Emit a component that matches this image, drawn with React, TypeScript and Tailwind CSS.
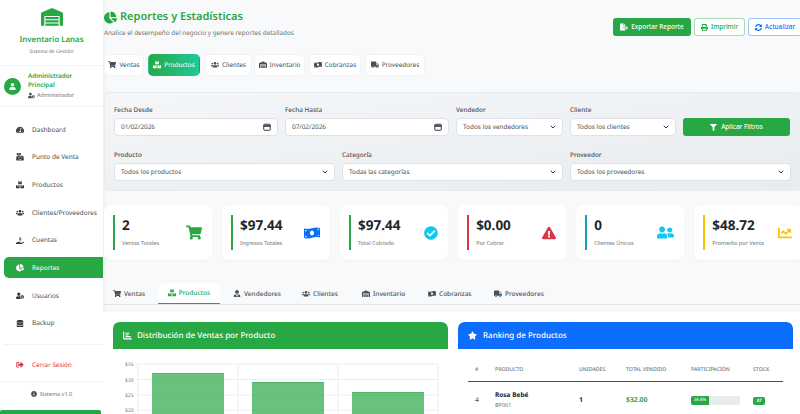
import React from 'react';
import { ChevronDown } from 'lucide-react';
import {
  FaBoxes, FaCashRegister, FaChartLine, FaChartPie, FaCheckCircle, FaDatabase,
  FaExclamationTriangle, FaFileExport, FaFilter, FaHandHoldingUsd, FaInfoCircle, FaMoneyBillWave,
  FaPrint, FaShoppingCart, FaSignOutAlt, FaStar, FaSyncAlt, FaTachometerAlt, FaTruck, FaUser,
  FaUserCog, FaUserFriends, FaUserShield, FaUserTie, FaUsers, FaWarehouse,
} from 'react-icons/fa';
import { FaChartBar } from 'react-icons/fa6';

const navItems = [
  { label: 'Dashboard', icon: FaTachometerAlt },
  { label: 'Punto de Venta', icon: FaCashRegister },
  { label: 'Productos', icon: FaBoxes },
  { label: 'Clientes/Proveedores', icon: FaUsers },
  { label: 'Cuentas', icon: FaHandHoldingUsd },
  { label: 'Reportes', icon: FaChartPie, active: true },
  { label: 'Usuarios', icon: FaUserCog },
  { label: 'Backup', icon: FaDatabase },
];

const topTabs = [
  { label: 'Ventas', icon: FaShoppingCart, cls: 'w-[40px]' },
  { label: 'Productos', icon: FaBoxes, cls: 'w-[52px] bg-gradient-to-r from-[#28a745] to-[#20c997] !text-white border-transparent' },
  { label: 'Clientes', icon: FaUsers, cls: 'w-[47px] ml-px border-[#28a745]/50' },
  { label: 'Inventario', icon: FaWarehouse, cls: 'w-[51px] -ml-0.5' },
  { label: 'Cobranzas', icon: FaMoneyBillWave, cls: 'w-[52px]' },
  { label: 'Proveedores', icon: FaTruck, cls: 'w-[60px]' },
];

const stats = [
  { value: '2', label: 'Ventas Totales', bar: 'bg-[#28a745]', icon: FaShoppingCart, color: 'text-[#28a745] h-[15px] w-[16px]' },
  { value: '$97.44', label: 'Ingresos Totales', bar: 'bg-[#28a745]', icon: FaMoneyBillWave, color: 'text-[#0d6efd] h-[16px] w-[16px]' },
  { value: '$97.44', label: 'Total Cobrado', bar: 'bg-[#28a745]', icon: FaCheckCircle, color: 'text-[#0dcaf0] h-[14px] w-[14px]' },
  { value: '$0.00', label: 'Por Cobrar', bar: 'bg-[#dc3545]', icon: FaExclamationTriangle, color: 'text-[#dc3545] h-[14px] w-[14px]' },
  { value: '0', label: 'Clientes Únicos', bar: 'bg-[#17a2b8]', icon: FaUserFriends, color: 'text-[#0dcaf0] h-[15px] w-[17px]' },
  { value: '$48.72', label: 'Promedio por Venta', bar: 'bg-[#ffc107]', icon: FaChartLine, color: 'text-[#ffc107] h-[14px] w-[14px]' },
];

const lowerTabs = [
  { label: 'Ventas', icon: FaShoppingCart, cls: 'w-[45px]' },
  { label: 'Productos', icon: FaBoxes, active: true, cls: 'w-[62px] justify-center' },
  { label: 'Vendedores', icon: FaUserTie, cls: 'w-[69px] pl-[13px]' },
  { label: 'Clientes', icon: FaUsers, cls: 'w-[60px] pl-[13px]' },
  { label: 'Inventario', icon: FaWarehouse, cls: 'w-[66px] pl-[13px]' },
  { label: 'Cobranzas', icon: FaMoneyBillWave, cls: 'w-[66px] pl-[13px]' },
  { label: 'Proveedores', icon: FaTruck, cls: 'w-[70px] pl-[13px]' },
];

function Field({ label, value, className = '' }: { label: string; value: string; className?: string }) {
  return (
    <div className={className}>
      <div className="mb-[3px] text-[6.4px] leading-[11px] font-medium text-[#495057]">{label}</div>
      <div className="relative flex h-[18px] items-center rounded-[4px] border border-[#dee2e6] bg-white pl-[6px] text-[6.4px] text-[#495057]">
        {value}
        <ChevronDown className="absolute right-[5px] top-[4px] h-2 w-2 text-[#343a40]" strokeWidth={3} />
      </div>
    </div>
  );
}

function DateField({ label, value }: { label: string; value: string }) {
  return (
    <div>
      <div className="mb-[3px] text-[6.4px] leading-[11px] font-medium text-[#495057]">{label}</div>
      <div className="relative flex h-[18px] items-center rounded-[4px] border border-[#dee2e6] bg-white pl-[6px] text-[6.4px] text-[#495057]">
        {value}
        <svg viewBox="0 0 16 16" className="absolute right-[6px] top-[4px] h-2 w-2" fill="none" stroke="#212529" strokeWidth="1.8">
          <rect x="1.5" y="2.5" width="13" height="12" rx="1.5" />
          <path d="M1.5 6h13" strokeWidth="3" />
        </svg>
      </div>
    </div>
  );
}

function SalesChart() {
  const ticks = [
    { label: '$35', y: 15 },
    { label: '$30', y: 30.5 },
    { label: '$25', y: 46 },
    { label: '$20', y: 61 },
  ];
  const bars = [
    { x: 39, y: 24 },
    { x: 139, y: 33 },
    { x: 239, y: 43 },
  ];
  return (
    <svg viewBox="0 0 335 65" className="h-[65px] w-[335px]">
      {ticks.map((t) => (
        <g key={t.label}>
          <line x1="22" x2="325" y1={t.y} y2={t.y} stroke="#eeeeee" />
          <text x="12" y={t.y + 2} fontSize="5" fill="#777777" fontFamily="'Noto Sans', sans-serif">{t.label}</text>
        </g>
      ))}
      {[25, 125, 225, 325].map((x) => (
        <line key={x} x1={x} x2={x} y1="15" y2="65" stroke="#eeeeee" />
      ))}
      {bars.map((b) => (
        <g key={b.x}>
          <rect x={b.x} y={b.y} width="72" height={65 - b.y} fill="#28a745" fillOpacity="0.7" />
          <rect x={b.x} y={b.y} width="72" height="1" fill="#28a745" fillOpacity="0.35" />
        </g>
      ))}
    </svg>
  );
}

export default function App() {
  return (
    <div className="flex h-[414px] w-[800px] overflow-hidden bg-[#f8f9fa] font-['Noto_Sans',sans-serif] text-[#212529] [text-rendering:geometricPrecision]">
      <aside className="flex w-[103px] shrink-0 flex-col bg-white shadow-[1px_0_6px_rgba(0,0,0,0.06)]">
        <div className="flex h-[66px] flex-col items-center border-b border-[#f1f3f5] pt-[8px]">
          <FaWarehouse className="h-[18px] w-[22px] text-[#28a745]" />
          <div className="mt-[7px] text-[7.8px] leading-[14px] font-semibold text-[#28a745]">Inventario Lanas</div>
          <div className="mt-[1px] text-[4.9px] leading-[8px] text-[#6c757d]">Sistema de Gestión</div>
        </div>
        <div className="flex h-[41px] items-center gap-[7px] border-b border-[#f1f3f5] pl-[4px]">
          <div className="flex h-[17px] w-[17px] shrink-0 items-center justify-center rounded-full bg-[#28a745]">
            <FaUser className="h-[7px] w-[7px] text-white" />
          </div>
          <div>
            <div className="text-[6.3px] leading-[8.5px] font-semibold text-[#28a745]">Administrador<br />Principal</div>
            <div className="mt-[2px] flex items-center gap-[2px] text-[5.5px] leading-[9px] text-[#6c757d]">
              <FaUserShield className="h-[7px] w-[7px] text-[#495057]" />
              Administrador
            </div>
          </div>
        </div>
        <nav className="mt-[12px] flex flex-col gap-[6.7px] pl-[4px]">
          {navItems.map(({ label, icon: Icon, active }) => (
            <div
              key={label}
              className={`flex h-[21px] items-center rounded-l-[5px] pl-[12px] text-[6.5px] ${
                active ? 'bg-[#28a745] text-white' : 'text-[#495057]'
              }`}
            >
              <Icon className={`mr-[8px] h-[7.5px] w-[8px] shrink-0 ${active ? 'text-white' : 'text-[#343a40]'}`} />
              <span className="whitespace-nowrap">{label}</span>
            </div>
          ))}
        </nav>
        <div className="ml-[4px] mt-[10px] border-t border-[#f1f3f5]" />
        <div className="ml-[4px] mt-[9px] flex h-[21px] items-center pl-[12px] text-[6.3px] text-[#dc3545]">
          <FaSignOutAlt className="mr-[8px] h-[7.5px] w-[8px]" />
          Cerrar Sesión
        </div>
        <div className="mt-[6px] flex h-[25px] items-center justify-center gap-[3px] border-t border-[#f1f3f5] text-[5.5px] text-[#6c757d]">
          <FaInfoCircle className="h-[6px] w-[6px] text-[#495057]" />
          Sistema v1.0
        </div>
        <div className="mt-auto h-[4px] w-[101px] rounded-t-[2px] bg-[#28a745]" />
      </aside>

      <main className="w-[699px] shrink-0 pt-[8px]">
        <div className="pl-px">
          <div className="flex h-[38px] justify-between">
            <div>
              <h1 className="flex items-center gap-[3px] text-[11px] leading-[18px] font-semibold text-[#28a745]">
                <FaChartPie className="h-[13px] w-[13px]" />
                Reportes y Estadísticas
              </h1>
              <p className="mt-[1px] text-[6.4px] leading-[11px] text-[#6c757d]">
                Analice el desempeño del negocio y genere reportes detallados
              </p>
            </div>
            <div className="mt-[10px] flex h-[18px] gap-[3px]">
              <button className="flex w-[78px] items-center justify-center gap-[3px] rounded-[3px] bg-[#28a745] text-[6.4px] font-medium text-white">
                <FaFileExport className="h-[8px] w-[8px]" />
                Exportar Reporte
              </button>
              <button className="flex w-[51px] items-center justify-center gap-[3px] rounded-[3px] border border-[#28a745]/40 bg-white text-[6.4px] font-medium text-[#28a745]">
                <FaPrint className="h-[7px] w-[7px]" />
                Imprimir
              </button>
              <button className="flex w-[54px] items-center justify-center gap-[3px] rounded-[3px] border border-[#0d6efd]/40 bg-white text-[6.4px] font-medium text-[#0d6efd]">
                <FaSyncAlt className="h-[7px] w-[7px]" />
                Actualizar
              </button>
            </div>
          </div>

          <div className="mt-[8px] flex h-[22px] gap-[4px]">
            {topTabs.map(({ label, icon: Icon, cls }) => (
              <div
                key={label}
                className={`flex items-center justify-center gap-[3px] rounded-[5px] border border-[#f1f3f5] bg-white text-[6.4px] whitespace-nowrap text-[#495057] ${cls}`}
              >
                <Icon className="h-[7.5px] w-[8px] shrink-0" />
                {label}
              </div>
            ))}
          </div>

          <section className="mt-[16px] h-[99px] rounded-[5px] border border-[#e9ecef] bg-gradient-to-br from-[#f4f6f8] to-[#e9ecef] pl-[9px] pr-[9px] pt-[11px]">
            <div className="grid grid-cols-[164px_164px_107px_106px_107px] gap-x-[7px]">
              <DateField label="Fecha Desde" value="01/02/2026" />
              <DateField label="Fecha Hasta" value="07/02/2026" />
              <Field label="Vendedor" value="Todos los vendedores" />
              <Field label="Cliente" value="Todos los clientes" />
              <div className="flex items-end">
                <button className="flex h-[18px] w-full items-center justify-center gap-[4px] rounded-[3px] bg-[#28a745] text-[6.4px] font-medium text-white">
                  <FaFilter className="h-[7px] w-[7px]" />
                  Aplicar Filtros
                </button>
              </div>
            </div>
            <div className="mt-[13px] grid grid-cols-[221px_221px_221px] gap-x-[7px]">
              <Field label="Producto" value="Todos los productos" />
              <Field label="Categoría" value="Todas las categorías" />
              <Field label="Proveedor" value="Todos los proveedores" />
            </div>
          </section>

          <section className="mt-[14px] grid grid-cols-6 gap-x-[10.3px]">
            {stats.map(({ value, label, bar, icon: Icon, color }) => (
              <div key={label} className="flex h-[55px] items-center justify-between rounded-[7px] bg-white pl-[9px] pr-[10px] shadow-[0_1px_3px_rgba(0,0,0,0.03)]">
                <div className="flex h-[35px] items-stretch gap-[7px]">
                  <div className={`w-[2px] ${bar}`} />
                  <div className="whitespace-nowrap">
                    <div className="text-[13.5px] leading-[20px] font-bold text-[#212529]">{value}</div>
                    <div className="mt-[4px] text-[5.5px] leading-[9px] text-[#6c757d]">{label}</div>
                  </div>
                </div>
                <Icon className={`shrink-0 ${color}`} />
              </div>
            ))}
          </section>

          <div className="mt-[23px] flex h-[22px] border-b border-[#e3e6e8] pl-[9px]">
            {lowerTabs.map(({ label, icon: Icon, active, cls }) => (
              <div
                key={label}
                className={`flex items-center gap-[3px] text-[6.5px] font-medium whitespace-nowrap ${cls} ${
                  active
                    ? 'rounded-t-[5px] border-b-[1.5px] border-[#28a745] bg-white text-[#28a745]'
                    : 'text-[#495057]'
                }`}
              >
                <Icon className="h-[7.5px] w-[8px] shrink-0" />
                {label}
              </div>
            ))}
          </div>
        </div>

        <section className="mt-[7px] grid h-[200px] grid-cols-[335px_335px] gap-x-[10px] bg-white pl-[10px] pt-[10px]">
          <div className="overflow-hidden rounded-t-[6px]">
            <div className="flex h-[27px] items-center gap-[5px] rounded-t-[6px] bg-[#28a745] pl-[10px] text-[8px] font-medium text-white">
              <FaChartBar className="h-[9px] w-[9px]" />
              Distribución de Ventas por Producto
            </div>
            <SalesChart />
          </div>
          <div className="overflow-hidden rounded-t-[6px]">
            <div className="flex h-[27px] items-center gap-[6px] rounded-t-[6px] bg-[#0d6efd] pl-[10px] text-[8px] font-medium text-white">
              <FaStar className="h-[9px] w-[9px]" />
              Ranking de Productos
            </div>
            <div className="px-[10px] pt-[13px]">
              <table className="w-full table-fixed border-collapse">
                <thead>
                  <tr className="border-b border-[#495057] text-left text-[5.2px] font-medium uppercase text-[#6c757d]">
                    <th className="h-[19px] w-[27px] pb-[2px] pl-[7px] font-medium">#</th>
                    <th className="w-[84px] pb-[2px] font-medium">Producto</th>
                    <th className="w-[47px] pb-[2px] font-medium">Unidades</th>
                    <th className="w-[65px] pb-[2px] font-medium">Total Vendido</th>
                    <th className="w-[62px] pb-[2px] font-medium">Participación</th>
                    <th className="pb-[2px] font-medium">Stock</th>
                  </tr>
                </thead>
                <tbody>
                  <tr className="text-[6.8px]">
                    <td className="pl-[7px] text-[#495057]">4</td>
                    <td className="pb-[9px] pt-[7px]">
                      <div className="text-[6.5px] leading-[11px] font-bold text-[#212529]">Rosa Bebé</div>
                      <div className="mt-[1px] text-[5.5px] leading-[9px] text-[#6c757d]">BP001</div>
                    </td>
                    <td className="font-bold">1</td>
                    <td className="font-bold text-[#28a745]">$32.00</td>
                    <td>
                      <div className="h-[9px] w-[49px] overflow-hidden rounded-[2px] bg-[#e9ecef]">
                        <div className="flex h-full w-[18px] items-center justify-center bg-[#28a745] text-[4.5px] text-white">36.8%</div>
                      </div>
                    </td>
                    <td>
                      <span className="inline-flex h-[8px] w-[12px] items-center justify-center rounded-[2px] bg-[#28a745] text-[4.5px] font-bold text-white">37</span>
                    </td>
                  </tr>
                </tbody>
              </table>
            </div>
          </div>
        </section>
      </main>
    </div>
  );
}
